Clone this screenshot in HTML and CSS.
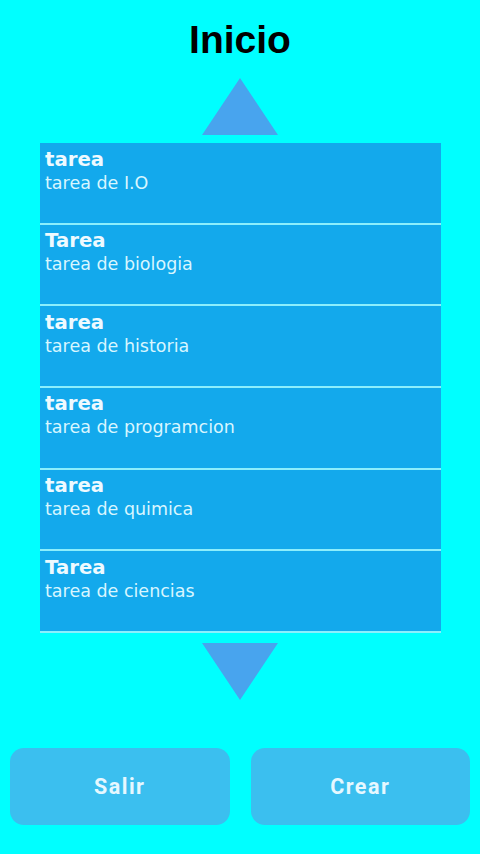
FILE: index.html
```html
<!DOCTYPE html>
<html lang="es">
<head>
<meta charset="utf-8">
<title>Inicio</title>
<link rel="stylesheet" href="styles.css">
</head>
<body>
<div class="screen">
  <h1 class="title">Inicio</h1>
  <div class="arrow arrow-up">
    <svg width="76" height="57" viewBox="0 0 76 57"><polygon points="38,0 76,57 0,57" fill="#48a4ee"/></svg>
  </div>
  <ul class="list">
    <li class="item"><div class="item-title">tarea</div><div class="item-sub">tarea de I.O</div></li>
    <li class="item"><div class="item-title">Tarea</div><div class="item-sub">tarea de biologia</div></li>
    <li class="item"><div class="item-title">tarea</div><div class="item-sub">tarea de historia</div></li>
    <li class="item"><div class="item-title">tarea</div><div class="item-sub">tarea de programcion</div></li>
    <li class="item"><div class="item-title">tarea</div><div class="item-sub">tarea de quimica</div></li>
    <li class="item"><div class="item-title">Tarea</div><div class="item-sub">tarea de ciencias</div></li>
  </ul>
  <div class="arrow arrow-down">
    <svg width="76" height="57" viewBox="0 0 76 57"><polygon points="0,0 76,0 38,57" fill="#48a4ee"/></svg>
  </div>
  <div class="buttons">
    <button class="btn">Salir</button>
    <button class="btn">Crear</button>
  </div>
</div>
</body>
</html>
```
FILE: styles.css
```css
html, body {
  margin: 0;
  padding: 0;
  background: #00ffff;
}
.screen {
  width: 480px;
  height: 854px;
  display: flex;
  flex-direction: column;
  align-items: center;
  font-family: "DejaVu Sans", "Liberation Sans", sans-serif;
}
.title {
  margin: 0;
  padding-top: 15px;
  height: 64px;
  box-sizing: border-box;
  font-family: "Liberation Sans", Arial, sans-serif;
  font-weight: bold;
  font-size: 39px;
  line-height: 50px;
  color: #000;
}
.arrow {
  display: flex;
  justify-content: center;
  width: 100%;
}
.arrow svg { display: block; }
.arrow-up { margin-top: 14px; }
.list {
  list-style: none;
  margin: 8px 0 0 40px;
  padding: 0;
  width: 401px;
  align-self: flex-start;
}
.item {
  height: 75.17px;
  border-bottom: 2px solid #8ceefc;
  background: #13a9ec;
  padding: 4.5px 0 0 5px;
  color: #eefaff;
}
.item-title {
  font-weight: bold;
  font-size: 19.7px;
  line-height: 24px;
}
.item-sub {
  font-size: 17.5px;
  line-height: 22px;
  color: #d8f6ff;
}
.arrow-down { margin-top: 10px; }
.buttons {
  margin-top: 48px;
  width: 100%;
  padding: 0 10px;
  box-sizing: border-box;
  display: flex;
  gap: 21px;
}
.btn {
  flex: 1;
  height: 77px;
  border: none;
  border-radius: 14px;
  background: #3bbfef;
  color: #e6f8ff;
  font-family: Roboto, "Liberation Sans", sans-serif;
  font-weight: bold;
  font-size: 21.5px;
  letter-spacing: 1.5px;
  padding: 0;
}
```
